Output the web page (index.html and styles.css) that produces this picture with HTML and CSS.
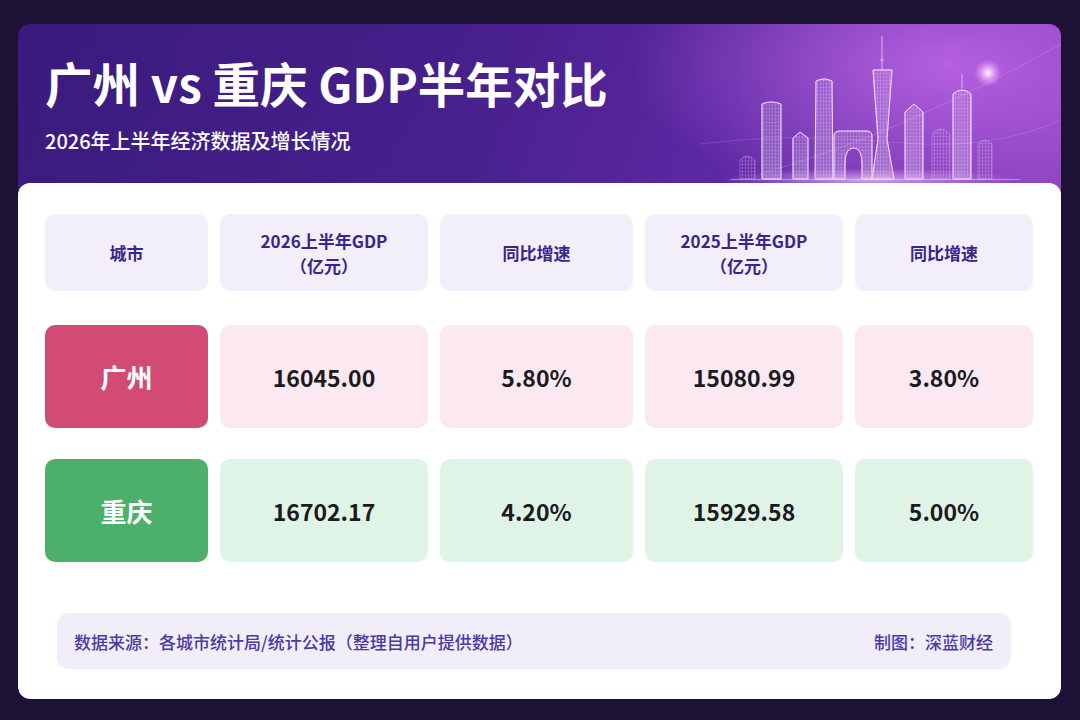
FILE: index.html
```html
<!DOCTYPE html>
<html lang="zh-CN">
<head>
<meta charset="utf-8">
<title>广州 vs 重庆 GDP半年对比</title>
<link rel="stylesheet" href="styles.css">
</head>
<body>
<div class="card">
  <header class="header">
    <svg class="skyline" width="361" height="159" viewBox="0 0 361 159" aria-hidden="true">
      <defs>
        <pattern id="win" width="3" height="3.5" patternUnits="userSpaceOnUse">
          <path d="M0 0.5H3M0.5 0V3.5" stroke="rgba(245,220,255,0.35)" stroke-width="0.5" fill="none"/>
        </pattern>
        <radialGradient id="glow" cx="0.5" cy="0.5" r="0.5">
          <stop offset="0" stop-color="#ffffff" stop-opacity="1"/>
          <stop offset="0.25" stop-color="#ffd8ff" stop-opacity="0.8"/>
          <stop offset="1" stop-color="#e9a0ff" stop-opacity="0"/>
        </radialGradient>
        <radialGradient id="base" cx="0.5" cy="0.5" r="0.5">
          <stop offset="0" stop-color="#f4d0ff" stop-opacity="0.7"/>
          <stop offset="1" stop-color="#e0a8ff" stop-opacity="0"/>
        </radialGradient>
        <linearGradient id="fade" x1="0" y1="0" x2="0" y2="1">
          <stop offset="0" stop-color="#ffffff" stop-opacity="0.10"/>
          <stop offset="1" stop-color="#ffffff" stop-opacity="0.24"/>
        </linearGradient>
      </defs>
      <path d="M0 120 Q90 108 190 118 T361 96" stroke="rgba(240,200,255,0.18)" stroke-width="1" fill="none"/>
      <path d="M60 150 Q200 110 361 20" stroke="rgba(240,200,255,0.22)" stroke-width="1" fill="none"/>
      <g stroke="rgba(240,210,255,0.35)" stroke-width="0.8">
        <path d="M40 155V136Q47 128 55 136V155Z" fill="url(#win)"/>
        <path d="M232 155V110Q241 100 250 110V155Z" fill="url(#win)"/>
        <path d="M278 155V120Q285 112 292 120V155Z" fill="url(#win)"/>
      </g>
      <g stroke="rgba(250,225,255,0.75)" stroke-width="0.9">
        <path d="M62 155V80Q71 76 81 80V155Z" fill="url(#fade)"/>
        <path d="M62 155V80Q71 76 81 80V155Z" fill="url(#win)"/>
        <path d="M93 155V114L100 108L108 114V155Z" fill="url(#fade)"/>
        <path d="M93 155V114L100 108L108 114V155Z" fill="url(#win)"/>
        <path d="M115 155L116 57Q124 53 132 57L133 155Z" fill="url(#fade)"/>
        <path d="M115 155L116 57Q124 53 132 57L133 155Z" fill="url(#win)"/>
        <path d="M134 155V112Q134 107 140 107H166Q172 107 172 112V155H162V140Q162 124 153.5 124Q145 124 145 140V155Z" fill="url(#fade)"/>
        <path d="M134 155V112Q134 107 140 107H166Q172 107 172 112V155H162V140Q162 124 153.5 124Q145 124 145 140V155Z" fill="url(#win)"/>
        <path d="M182 12V46M180 36H184" fill="none"/>
        <path d="M173 46H192L187 115L194 155H172L178 115Z" fill="url(#fade)"/>
        <path d="M173 46H192L187 115L194 155H172L178 115Z" fill="url(#win)"/>
        <path d="M205 155V88L214 80L223 88V155Z" fill="url(#fade)"/>
        <path d="M205 155V88L214 80L223 88V155Z" fill="url(#win)"/>
        <path d="M262 50V64" fill="none"/>
        <path d="M253 155V70Q262 62 271 70V155Z" fill="url(#fade)"/>
        <path d="M253 155V70Q262 62 271 70V155Z" fill="url(#win)"/>
      </g>
      <ellipse cx="170" cy="156" rx="150" ry="12" fill="url(#base)"/>
      <line x1="30" y1="155.5" x2="320" y2="155.5" stroke="rgba(250,225,255,0.45)" stroke-width="1"/>
      <circle cx="288" cy="49" r="14" fill="url(#glow)"/>
    </svg>
    <h1 class="title">广州 vs 重庆 GDP半年对比</h1>
    <p class="subtitle">2026年上半年经济数据及增长情况</p>
  </header>

  <main class="panel">
    <div class="table">
      <div class="row row-head">
        <div class="cell head">城市</div>
        <div class="cell head">2026上半年GDP<br>（亿元）</div>
        <div class="cell head">同比增速</div>
        <div class="cell head">2025上半年GDP<br>（亿元）</div>
        <div class="cell head">同比增速</div>
      </div>

      <div class="row row-data">
        <div class="cell city city-gz">广州</div>
        <div class="cell num pink">16045.00</div>
        <div class="cell num pink">5.80%</div>
        <div class="cell num pink">15080.99</div>
        <div class="cell num pink">3.80%</div>
      </div>

      <div class="row row-data">
        <div class="cell city city-cq">重庆</div>
        <div class="cell num green">16702.17</div>
        <div class="cell num green">4.20%</div>
        <div class="cell num green">15929.58</div>
        <div class="cell num green">5.00%</div>
      </div>
    </div>

    <footer class="footer">
      <span>数据来源：各城市统计局/统计公报（整理自用户提供数据）</span>
      <span>制图：深蓝财经</span>
    </footer>
  </main>
</div>
</body>
</html>
```

FILE: styles.css
```css
* {
  box-sizing: border-box;
}

html, body {
  margin: 0;
  padding: 0;
}

body {
  width: 1080px;
  height: 720px;
  background: #1c1236;
  padding: 24px 19px 21px 18px;
  font-family: "Noto Sans CJK SC", "Noto Sans", sans-serif;
  overflow: hidden;
}

.card {
  width: 1043px;
  height: 675px;
  border-radius: 12px;
  overflow: hidden;
  display: flex;
  flex-direction: column;
  background:
    radial-gradient(ellipse 320px 150px at 930px 40px, rgba(200, 110, 240, 0.75), rgba(200, 110, 240, 0) 100%),
    linear-gradient(180deg, rgba(50, 20, 110, 0.35) 0%, rgba(110, 45, 180, 0.0) 100%),
    linear-gradient(95deg, #3e1e84 0%, #4f2598 40%, #6d30b8 65%, #9b48d2 85%, #b055dc 100%);
}

.header {
  position: relative;
  height: 159px;
  flex: none;
  padding: 31px 0 0 27px;
}

.skyline {
  position: absolute;
  left: 682px;
  top: 0;
}

.title {
  position: relative;
  margin: 0;
  font-size: 47.5px;
  line-height: 56px;
  font-weight: 700;
  color: #ffffff;
}

.subtitle {
  position: relative;
  margin: 18px 0 0;
  font-size: 20px;
  line-height: 24px;
  font-weight: 500;
  color: #ffffff;
}

.panel {
  flex: 1;
  background: #ffffff;
  border-radius: 12px;
  padding: 31px 27px 0;
}

.table {
  display: flex;
  flex-direction: column;
}

.row {
  display: grid;
  grid-template-columns: 163px 208px 193px 198px 178px;
  column-gap: 12px;
}

.row-head {
  height: 77px;
  margin-bottom: 34px;
}

.row-data {
  height: 103px;
}

.row-data + .row-data {
  margin-top: 31px;
}

.cell {
  display: flex;
  align-items: center;
  justify-content: center;
  text-align: center;
  border-radius: 10px;
}

.head {
  background: #f3effa;
  color: #3a2588;
  font-size: 17px;
  line-height: 25px;
  font-weight: 700;
}

.city {
  color: #ffffff;
  font-size: 26px;
  font-weight: 700;
}

.city-gz {
  background: #d24b74;
}

.city-cq {
  background: #4cb06b;
}

.num {
  color: #1b1b1f;
  font-size: 23px;
  font-weight: 700;
}

.pink {
  background: #fce8f0;
}

.green {
  background: #e0f3e7;
}

.footer {
  margin: 51px 23px 0 12px;
  height: 56px;
  border-radius: 12px;
  background: #f1edf9;
  display: flex;
  align-items: center;
  justify-content: space-between;
  padding: 0 18px 0 17px;
  color: #4b3a9f;
  font-size: 17px;
  font-weight: 500;
}
```
